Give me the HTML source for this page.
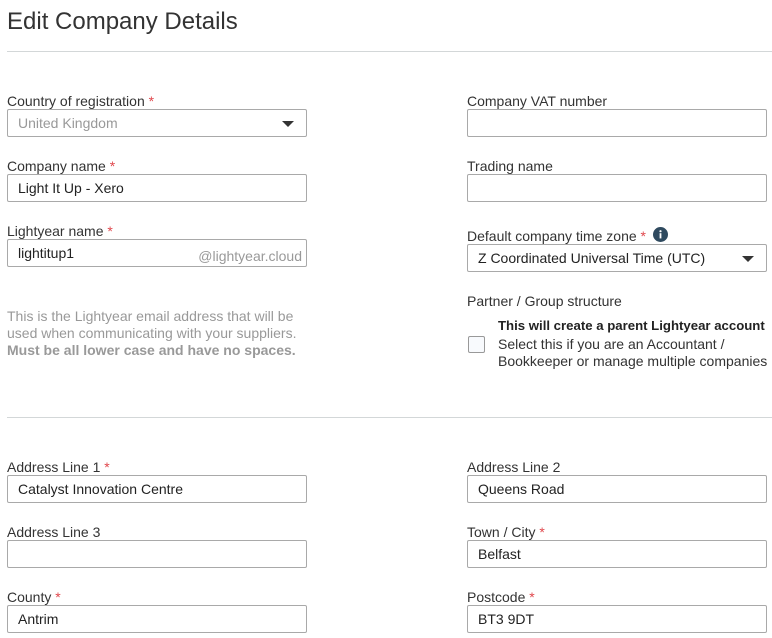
<!DOCTYPE html>
<html><head><meta charset="utf-8"><style>
body{margin:0;width:772px;height:638px;background:#fff;font-family:"Liberation Sans",sans-serif;color:#333;position:relative;overflow:hidden}
.a{position:absolute;white-space:nowrap}
h1{position:absolute;left:7px;top:8px;margin:0;font-size:24px;font-weight:normal;color:#333}
.hr{position:absolute;left:7px;width:765px;height:1px;background:#d3d7d8}
.l{position:absolute;font-size:14px;color:#333;white-space:nowrap}
.l i{font-style:normal;color:#e0474c}
.b{position:absolute;height:26px;border:1px solid #a9a9a9;border-radius:2px;font-size:14px;line-height:27px;padding-left:10px;box-sizing:content-box;width:288px;color:#222;white-space:nowrap}
.c{position:absolute;right:12px;top:11px;width:0;height:0;border-left:6px solid transparent;border-right:6px solid transparent;border-top:6px solid #333}
.n{position:absolute;left:7px;font-size:14px;color:#999;line-height:17px}
</style></head><body>
<h1>Edit Company Details</h1>
<div class="hr" style="top:51px"></div>

<div class="l" style="left:7px;top:93px">Country of registration <i>*</i></div>
<div class="b" style="left:7px;top:109px;color:#999">United Kingdom<span class="c"></span></div>
<div class="l" style="left:7px;top:158px">Company name <i>*</i></div>
<div class="b" style="left:7px;top:174px">Light It Up - Xero</div>
<div class="l" style="left:7px;top:223px">Lightyear name <i>*</i></div>
<div class="b" style="left:7px;top:239px;line-height:26px">lightitup1<span style="position:absolute;right:4px;top:3px;color:#999">@lightyear.cloud</span></div>
<div class="n" style="top:308px">This is the Lightyear email address that will be<br>used when communicating with your suppliers.<br><b>Must be all lower case and have no spaces.</b></div>

<div class="l" style="left:467px;top:93px">Company VAT number</div>
<div class="b" style="left:467px;top:109px"></div>
<div class="l" style="left:467px;top:158px">Trading name</div>
<div class="b" style="left:467px;top:174px"></div>
<div class="l" style="left:467px;top:228px">Default company time zone <i>*</i></div>
<svg class="a" style="left:653px;top:227px" width="15" height="15" viewBox="0 0 15 15"><circle cx="7.5" cy="7.5" r="7.5" fill="#2f4a5f"/><rect x="6.6" y="6.2" width="1.8" height="5.2" fill="#fff"/><circle cx="7.5" cy="4.2" r="1.1" fill="#fff"/></svg>
<div class="b" style="left:467px;top:244px">Z Coordinated Universal Time (UTC)<span class="c"></span></div>
<div class="l" style="left:467px;top:293px">Partner / Group structure</div>
<div class="a" style="left:498px;top:318px;font-size:13.2px;font-weight:bold;color:#222">This will create a parent Lightyear account</div>
<div class="a" style="left:468px;top:336px;width:15px;height:15px;border:1px solid #999;border-radius:2px;background:#f8fafd"></div>
<div class="a" style="left:498px;top:336px;font-size:14px;line-height:17px;color:#333">Select this if you are an Accountant /<br>Bookkeeper or manage multiple companies</div>

<div class="hr" style="top:417px"></div>

<div class="l" style="left:7px;top:459px">Address Line 1 <i>*</i></div>
<div class="b" style="left:7px;top:475px">Catalyst Innovation Centre</div>
<div class="l" style="left:7px;top:524px">Address Line 3</div>
<div class="b" style="left:7px;top:540px"></div>
<div class="l" style="left:7px;top:589px">County <i>*</i></div>
<div class="b" style="left:7px;top:605px">Antrim</div>

<div class="l" style="left:467px;top:459px">Address Line 2</div>
<div class="b" style="left:467px;top:475px">Queens Road</div>
<div class="l" style="left:467px;top:524px">Town / City <i>*</i></div>
<div class="b" style="left:467px;top:540px">Belfast</div>
<div class="l" style="left:467px;top:589px">Postcode <i>*</i></div>
<div class="b" style="left:467px;top:605px">BT3 9DT</div>
</body></html>
